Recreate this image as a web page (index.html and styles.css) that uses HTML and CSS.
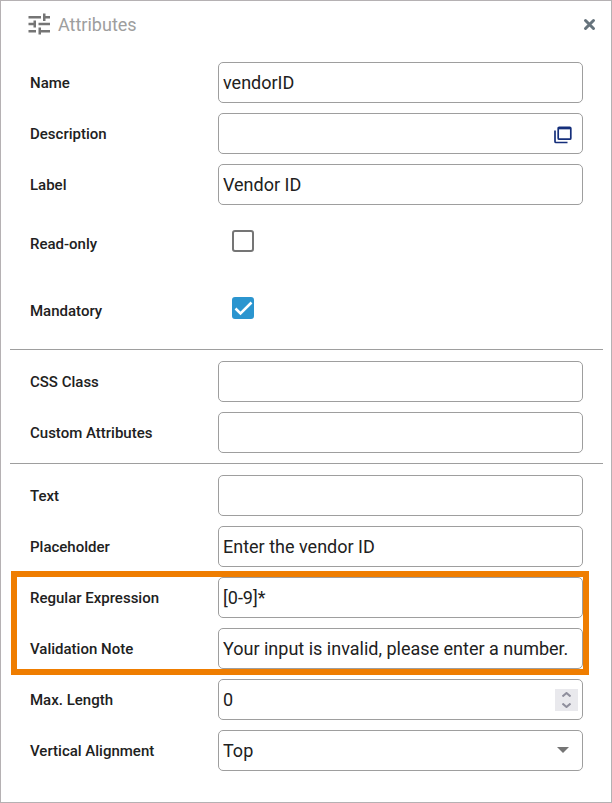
FILE: index.html
```
<!DOCTYPE html>
<html lang="en">
<head>
    <meta charset="UTF-8">
    <meta name="viewport" content="width=device-width, initial-scale=1.0">
    <title>Attributes</title>
    <link rel="stylesheet" href="styles.css">
</head>
<body>
    <form class="panel">
        <header class="panel-header">
            <svg class="tune-icon" width="22" height="22" viewBox="0 0 22 22" aria-hidden="true">
                <path d="M.5 3h12.500v2.500H.5zM15 .5h2.500V3H22v2.500h-4.500V8H15zM5.500 7.500H8v7H5.500v-2.300h-5V9.800h5zM10.500 9.800H22v2.400H10.500zM10.500 14.500H13V17h9v2.500h-9V21.500h-2.500zM.5 17H8v2.500H.5z"/>
            </svg>
            <h1 class="panel-title">Attributes</h1>
            <button type="button" class="close" aria-label="Close">
                <svg width="13" height="13" viewBox="0 0 13 13"><path d="M2.500 2.500l8 8M10.500 2.500l-8 8"/></svg>
            </button>
        </header>

        <section class="group">
            <div class="row">
                <label for="name">Name</label>
                <input class="field" type="text" id="name" value="vendorID">
            </div>
            <div class="row">
                <label for="description">Description</label>
                <div class="control">
                    <input class="field" type="text" id="description">
                    <button type="button" class="expand" aria-label="Open editor">
                        <svg width="18" height="18" viewBox="0 0 18 18">
                            <path d="M5.200 1.300h10.600a1 1 0 0 1 1 1v9.900a1 1 0 0 1-1 1H5.200a1 1 0 0 1-1-1V2.300a1 1 0 0 1 1-1zM1 4.500v11a1 1 0 0 0 1 1h11.500"/>
                            <path d="M4.200 2.500h12.600"/>
                        </svg>
                    </button>
                </div>
            </div>
            <div class="row">
                <label for="label">Label</label>
                <input class="field" type="text" id="label" value="Vendor ID">
            </div>
            <div class="row row-check">
                <label for="readonly">Read-only</label>
                <div class="check">
                    <input type="checkbox" id="readonly">
                    <svg viewBox="0 0 22 22" aria-hidden="true"><path d="M3.500 12l5 4.500L19 6"/></svg>
                </div>
            </div>
            <div class="row row-check">
                <label for="mandatory">Mandatory</label>
                <div class="check">
                    <input type="checkbox" id="mandatory" checked>
                    <svg viewBox="0 0 22 22" aria-hidden="true"><path d="M3.500 11.500l5 5L19.500 5.500"/></svg>
                </div>
            </div>
        </section>

        <section class="group">
            <div class="row">
                <label for="cssClass">CSS Class</label>
                <input class="field" type="text" id="cssClass">
            </div>
            <div class="row">
                <label for="customAttributes">Custom Attributes</label>
                <input class="field" type="text" id="customAttributes">
            </div>
        </section>

        <section class="group">
            <div class="row">
                <label for="text">Text</label>
                <input class="field" type="text" id="text">
            </div>
            <div class="row">
                <label for="placeholder">Placeholder</label>
                <input class="field" type="text" id="placeholder" value="Enter the vendor ID">
            </div>
            <div class="highlight">
                <div class="row">
                    <label for="regex">Regular Expression</label>
                    <input class="field" type="text" id="regex" value="[0-9]*">
                </div>
                <div class="row">
                    <label for="note">Validation Note</label>
                    <input class="field" type="text" id="note" value="Your input is invalid, please enter a number.">
                </div>
            </div>
            <div class="row">
                <label for="maxLength">Max. Length</label>
                <div class="control">
                    <input class="field" type="number" id="maxLength" value="0">
                    <div class="spinner">
                        <button type="button" aria-label="Increase"><svg width="9" height="5" viewBox="0 0 9 5"><path d="M.5 4.500l4-3.500 4 3.500"/></svg></button>
                        <button type="button" aria-label="Decrease"><svg width="9" height="5" viewBox="0 0 9 5"><path d="M.5 .5l4 3.500 4-3.500"/></svg></button>
                    </div>
                </div>
            </div>
            <div class="row">
                <label for="align">Vertical Alignment</label>
                <div class="control">
                    <select class="field" id="align">
                        <option>Top</option>
                        <option>Middle</option>
                        <option>Bottom</option>
                    </select>
                    <svg class="arrow" width="12" height="6" viewBox="0 0 12 6" aria-hidden="true"><path d="M0 0h12L6 6z"/></svg>
                </div>
            </div>
        </section>
    </form>
</body>
</html>
```

FILE: styles.css
```
* {
    box-sizing: border-box;
}
body {
    margin: 0;
    font-family: Roboto, Arial, sans-serif;
    color: #212121;
    background: white;
}
.panel {
    min-height: 100vh;
    padding: 0 8px 0 9px;
    border: 1px solid #b5b1b3;
}
.panel-header {
    display: flex;
    align-items: center;
    height: 50px;
    padding: 0 5px 4px 18px;
}
.tune-icon { fill: #757575; }
.panel-title {
    flex: 1;
    margin: 0 0 0 8px;
    font-size: 18px;
    font-weight: 400;
    color: #9e9e9e;
}
button {
    display: flex;
    align-items: center;
    justify-content: center;
    padding: 0;
    border: none;
    background: none;
    cursor: pointer;
}
.close {
    width: 17px;
    height: 20px;
}
.close path {
    stroke: #66737c;
    stroke-width: 3;
    stroke-linecap: round;
}

.group {
    display: flex;
    flex-direction: column;
    gap: 10px;
    padding: 11px 20px 10px;
}
.group + .group { border-top: 1px solid #9e9e9e; }
.row {
    display: grid;
    grid-template-columns: 188px 1fr;
    align-items: center;
}
.row label {
    font-size: 15px;
    font-weight: 500;
}
.field {
    width: 100%;
    height: 41px;
    padding: 0 4px;
    border: 1px solid #9e9e9e;
    border-radius: 5px;
    background: white;
    color: #212121;
    font-family: inherit;
    font-size: 18px;
    appearance: none;
}
.field[type="number"] { appearance: textfield; }
.field::-webkit-inner-spin-button { display: none; }

/* icons laid over the right end of a field */
.control { position: relative; }
.expand {
    position: absolute;
    top: 13px;
    right: 11px;
}
.expand path {
    fill: none;
    stroke: #152f7b;
    stroke-width: 1.7;
}
.spinner {
    position: absolute;
    top: 10px;
    right: 5px;
    width: 23px;
    height: 22px;
    display: flex;
    flex-direction: column;
    background: #e9e9ed;
}
.spinner button { flex: 1; }
.spinner path {
    fill: none;
    stroke: #8f8f9d;
    stroke-width: 2;
}
.arrow {
    position: absolute;
    top: 17px;
    right: 14px;
    fill: #757575;
    pointer-events: none;
}

.row-check { height: 57px; }
.check {
    display: grid;
    justify-content: start;
    padding: 0 14px 5px;
}
.check input,
.check svg {
    grid-area: 1 / 1;
    width: 22px;
    height: 22px;
    margin: 0;
}
.check input {
    appearance: none;
    border: 2px solid #757575;
    border-radius: 3px;
}
.check input:checked {
    border-color: #2b95cf;
    background: #2b95cf;
}
.check svg {
    display: none;
    pointer-events: none;
}
.check input:checked + svg { display: block; }
.check path {
    fill: none;
    stroke: white;
    stroke-width: 2.5;
}

.highlight {
    position: relative;
    display: flex;
    flex-direction: column;
    gap: 10px;
}
.highlight::after {
    content: "";
    position: absolute;
    inset: -6px -6px -6px -19px;
    border: 6px solid #ef7d00;
    pointer-events: none;
}
```
